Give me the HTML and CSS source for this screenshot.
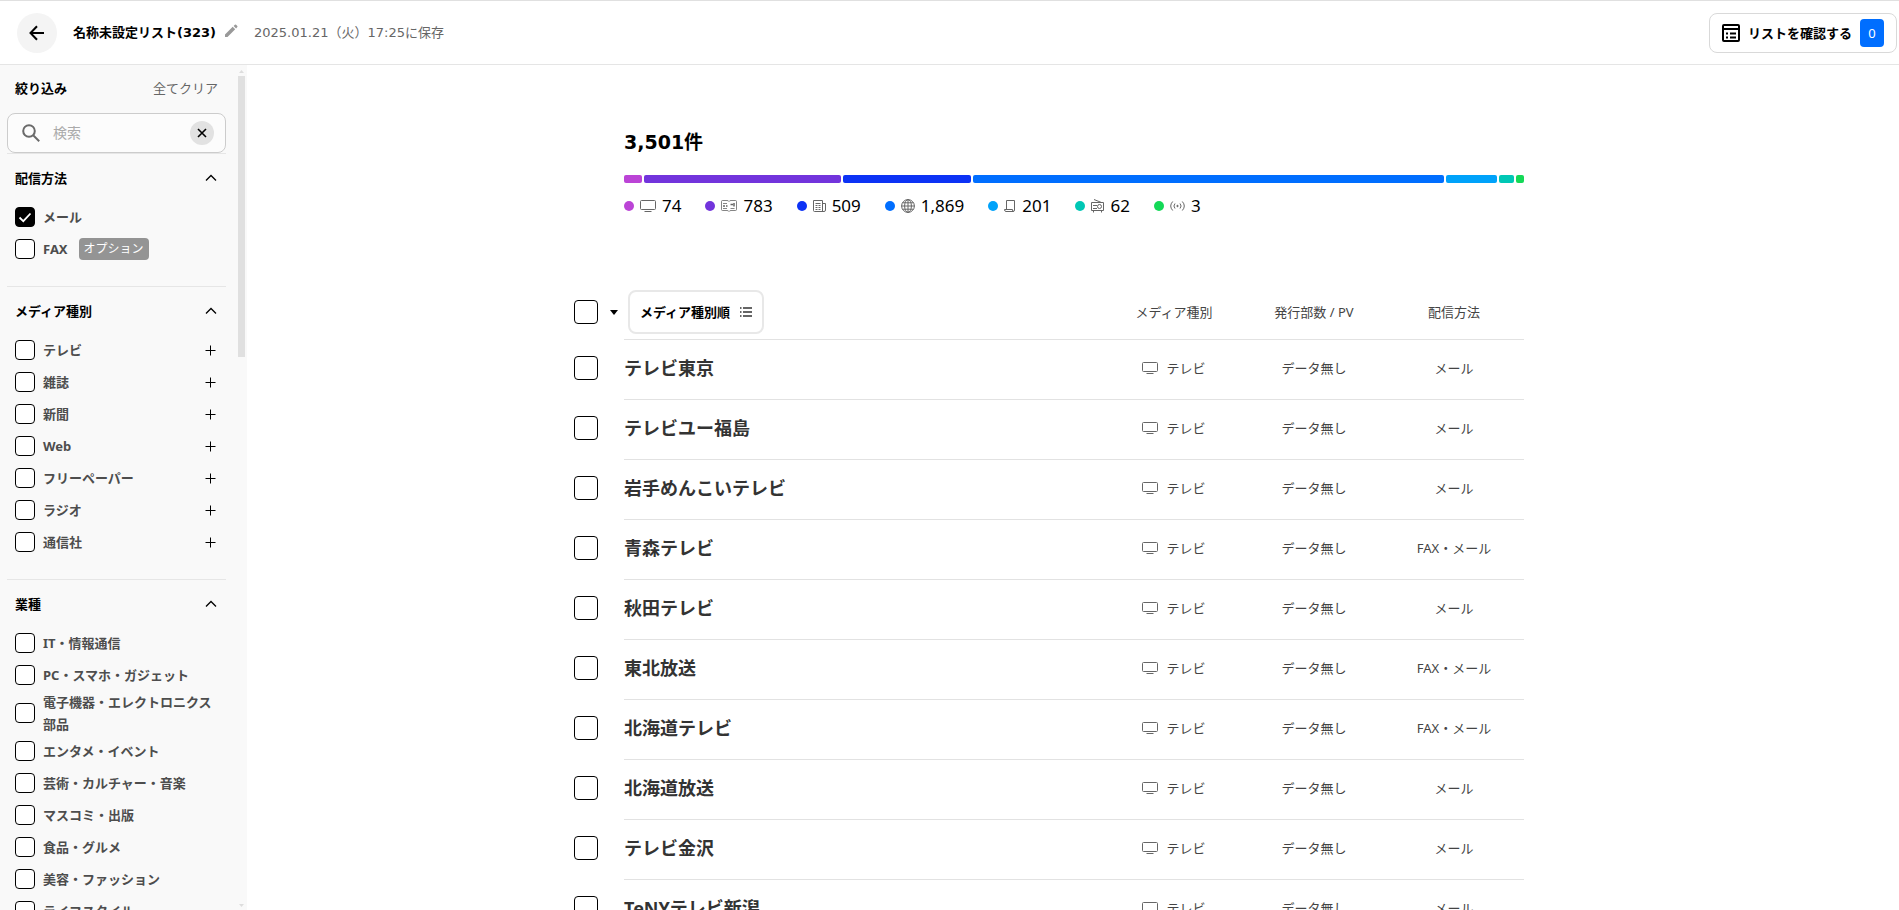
FILE: index.html
```html
<!DOCTYPE html>
<html lang="ja">
<head>
<meta charset="utf-8">
<title>名称未設定リスト</title>
<link rel="stylesheet" href="styles.css">
</head>
<body>
<svg class="sprite" aria-hidden="true">
  <symbol id="tv" viewBox="0 0 16 14"><rect x=".5" y="1.5" width="15" height="9" rx="1" fill="none" stroke="currentColor"/><path d="M4.500 12.500h7" stroke="currentColor"/></symbol>
  <symbol id="chevron" viewBox="0 0 12 8"><path d="M1 6.500 6 1.500l5 5" fill="none" stroke="currentColor" stroke-width="1.300"/></symbol>
  <symbol id="plus" viewBox="0 0 11 11"><path d="M.5 5.500h10M5.500.5v10" stroke="currentColor"/></symbol>
</svg>
<header class="header">
  <button class="back" aria-label="戻る"><svg width="16" height="16" viewBox="0 0 16 16"><path d="M15 8H1.500M8 1.200 1.500 8 8 14.800" fill="none" stroke="#000" stroke-width="2"/></svg></button>
  <h1 class="list-name">名称未設定リスト(323)</h1>
  <button class="edit" aria-label="名称を編集"><svg width="14" height="14" viewBox="0 0 14 14"><path d="M1 10.500 8.700 2.800l2.500 2.500L3.500 13H1zM9.600 1.900 10.900.7q.6-.5 1.200 0l1.200 1.200q.5.600 0 1.200l-1.200 1.300z" fill="#999"/></svg></button>
  <p class="saved">2025.01.21（火）17:25に保存</p>
  <button class="confirm">
    <svg width="18" height="18" viewBox="0 0 18 18" fill="none" stroke="#000" stroke-width="2"><rect x="1" y="1" width="16" height="16" rx="1"/><path d="M1 5h16M4 9.500h2M8 9.500h6M4 13.500h2M8 13.500h6"/></svg>
    <span>リストを確認する</span><span class="count">0</span>
  </button>
</header>
<div class="body">
  <aside class="sidebar">
    <div class="filters">
      <div class="filter-head"><h2>絞り込み</h2><button class="clear-all">全てクリア</button></div>
      <div class="search">
        <svg width="18" height="18" viewBox="0 0 18 18" fill="none" stroke="#6a6a6a" stroke-width="2"><circle cx="7" cy="7" r="5.800"/><path d="m11.200 11.200 6 6"/></svg>
        <input type="text" placeholder="検索" aria-label="検索">
        <button class="clear" aria-label="クリア"><svg width="10" height="10" viewBox="0 0 10 10"><path d="m1 1 8 8M9 1 1 9" stroke="#000" stroke-width="1.600"/></svg></button>
      </div>
      <section class="group">
        <h3><button>配信方法<svg width="12" height="8"><use href="#chevron"/></svg></button></h3>
        <div class="option"><label><input class="check" type="checkbox" checked><span>メール</span></label></div>
        <div class="option"><label><input class="check" type="checkbox"><span>FAX</span><span class="badge">オプション</span></label></div>
      </section>
      <section class="group">
        <h3><button>メディア種別<svg width="12" height="8"><use href="#chevron"/></svg></button></h3>
        <div class="option"><label><input class="check" type="checkbox"><span>テレビ</span></label><button class="expand" aria-label="テレビを開く"><svg width="11" height="11"><use href="#plus"/></svg></button></div>
        <div class="option"><label><input class="check" type="checkbox"><span>雑誌</span></label><button class="expand" aria-label="雑誌を開く"><svg width="11" height="11"><use href="#plus"/></svg></button></div>
        <div class="option"><label><input class="check" type="checkbox"><span>新聞</span></label><button class="expand" aria-label="新聞を開く"><svg width="11" height="11"><use href="#plus"/></svg></button></div>
        <div class="option"><label><input class="check" type="checkbox"><span>Web</span></label><button class="expand" aria-label="Webを開く"><svg width="11" height="11"><use href="#plus"/></svg></button></div>
        <div class="option"><label><input class="check" type="checkbox"><span>フリーペーパー</span></label><button class="expand" aria-label="フリーペーパーを開く"><svg width="11" height="11"><use href="#plus"/></svg></button></div>
        <div class="option"><label><input class="check" type="checkbox"><span>ラジオ</span></label><button class="expand" aria-label="ラジオを開く"><svg width="11" height="11"><use href="#plus"/></svg></button></div>
        <div class="option"><label><input class="check" type="checkbox"><span>通信社</span></label><button class="expand" aria-label="通信社を開く"><svg width="11" height="11"><use href="#plus"/></svg></button></div>
      </section>
      <section class="group">
        <h3><button>業種<svg width="12" height="8"><use href="#chevron"/></svg></button></h3>
        <div class="option"><label><input class="check" type="checkbox"><span>IT・情報通信</span></label></div>
        <div class="option"><label><input class="check" type="checkbox"><span>PC・スマホ・ガジェット</span></label></div>
        <div class="option"><label><input class="check" type="checkbox"><span>電子機器・エレクトロニクス部品</span></label></div>
        <div class="option"><label><input class="check" type="checkbox"><span>エンタメ・イベント</span></label></div>
        <div class="option"><label><input class="check" type="checkbox"><span>芸術・カルチャー・音楽</span></label></div>
        <div class="option"><label><input class="check" type="checkbox"><span>マスコミ・出版</span></label></div>
        <div class="option"><label><input class="check" type="checkbox"><span>食品・グルメ</span></label></div>
        <div class="option"><label><input class="check" type="checkbox"><span>美容・ファッション</span></label></div>
        <div class="option"><label><input class="check" type="checkbox"><span>ライフスタイル</span></label></div>
      </section>
    </div>
    <div class="scrollbar" aria-hidden="true">
      <svg width="5" height="3" viewBox="0 0 5 3"><path d="M0 3 2.500 0 5 3z" fill="#ddd"/></svg>
      <div class="track"><div class="thumb"></div></div>
      <svg width="5" height="3" viewBox="0 0 5 3"><path d="M0 0 2.500 3 5 0z" fill="#ddd"/></svg>
    </div>
  </aside>
  <main class="main">
    <div class="container">
      <section class="summary">
        <h2 class="total">3,501件</h2>
        <div class="bar">
          <i class="c1" style="flex-grow:18"></i><i class="c2" style="flex-grow:197"></i><i class="c3" style="flex-grow:128"></i><i class="c4" style="flex-grow:470"></i><i class="c5" style="flex-grow:51"></i><i class="c6" style="flex-grow:15"></i><i class="c7" style="flex-grow:8"></i>
        </div>
        <ul class="legend">
          <li><i class="dot c1"></i><svg width="16" height="14"><use href="#tv"/></svg>74</li>
          <li><i class="dot c2"></i><svg width="16" height="14" viewBox="0 0 16 14" fill="none" stroke="currentColor"><path d="M8 12.500q-.5-1-2-1H1.500q-1 0-1-1v-8q0-1 1-1H6q1.500 0 2 1 .5-1 2-1h4.500q1 0 1 1v8q0 1-1 1H10q-1.500 0-2 1z" stroke-width=".8"/><path d="M2 4.500h4M2 9.500h4M9.500 9.500h4" stroke-width=".8"/><path d="M2 7h2M5 7h1.500M9.500 5.500H12M13 4v3.500" stroke-width="1.500"/></svg>783</li>
          <li><i class="dot c3"></i><svg width="13" height="14" viewBox="0 0 13 14" fill="none" stroke="currentColor"><path d="M9.500 12.500V1.500h-9v10q0 1 1 1h9.500q1.500 0 1.500-1.500V4.500h-3M2.500 4.500h5M2.500 6.500h2M5.500 6.500h2M2.500 8.500h2M5.500 8.500h2M2.500 10.500h2M5.500 10.500h2"/></svg>509</li>
          <li><i class="dot c4"></i><svg width="14" height="14" viewBox="0 0 14 14" fill="none" stroke="currentColor"><circle cx="7" cy="7" r="6.400"/><ellipse cx="7" cy="7" rx="3.400" ry="6.400"/><path d="M7 .5v13M.5 7h13M1.500 3.800h11M1.500 10.200h11"/></svg>1,869</li>
          <li><i class="dot c5"></i><svg width="12" height="14" viewBox="0 0 12 14" fill="none" stroke="currentColor"><path d="M2.500 10V1.500h8V11q0 1.500-1.500 1.500H2q-1.500 0-1.500-2h8q0 2 1 2"/></svg>201</li>
          <li><i class="dot c6"></i><svg width="13" height="14" viewBox="0 0 13 14" fill="none" stroke="currentColor"><path d="M3 .5 10.500 3.500M.5 3.500h12v8H.5zM2.500 11.500v2M10.500 11.500v2M2 6.500h4M2 9.500h4"/><circle cx="8.500" cy="7.500" r="2"/></svg>62</li>
          <li><i class="dot c7"></i><svg width="15" height="14" viewBox="0 0 15 14" fill="none" stroke="currentColor"><path d="M2.700 2.500q-4 4.500 0 9M5 4.500q-2.200 2.500 0 5M12.300 2.500q4 4.500 0 9M10 4.500q2.200 2.500 0 5"/><circle cx="7.500" cy="7" r=".7" fill="currentColor"/></svg>3</li>
        </ul>
      </section>
      <table class="media">
        <thead>
          <tr>
            <th class="pick"><div class="pick-all"><input class="check large" type="checkbox" aria-label="全て選択"><button class="caret" aria-label="選択メニュー"><svg width="8" height="5" viewBox="0 0 8 5"><path d="M0 0h8L4 5z"/></svg></button></div></th>
            <th class="name"><button class="sort">メディア種別順<svg width="12" height="10" viewBox="0 0 12 10" stroke="#333" stroke-width="1.600"><path d="M0 1h1.500M3 1h9M0 5h1.500M3 5h9M0 9h1.500M3 9h9"/></svg></button></th>
            <th>メディア種別</th><th>発行部数 / PV</th><th>配信方法</th>
          </tr>
        </thead>
        <tbody>
          <tr><td class="pick"><input class="check large" type="checkbox" aria-label="テレビ東京"></td><td class="name">テレビ東京</td><td><span class="kind"><svg width="16" height="14"><use href="#tv"/></svg>テレビ</span></td><td>データ無し</td><td>メール</td></tr>
          <tr><td class="pick"><input class="check large" type="checkbox" aria-label="テレビユー福島"></td><td class="name">テレビユー福島</td><td><span class="kind"><svg width="16" height="14"><use href="#tv"/></svg>テレビ</span></td><td>データ無し</td><td>メール</td></tr>
          <tr><td class="pick"><input class="check large" type="checkbox" aria-label="岩手めんこいテレビ"></td><td class="name">岩手めんこいテレビ</td><td><span class="kind"><svg width="16" height="14"><use href="#tv"/></svg>テレビ</span></td><td>データ無し</td><td>メール</td></tr>
          <tr><td class="pick"><input class="check large" type="checkbox" aria-label="青森テレビ"></td><td class="name">青森テレビ</td><td><span class="kind"><svg width="16" height="14"><use href="#tv"/></svg>テレビ</span></td><td>データ無し</td><td>FAX・メール</td></tr>
          <tr><td class="pick"><input class="check large" type="checkbox" aria-label="秋田テレビ"></td><td class="name">秋田テレビ</td><td><span class="kind"><svg width="16" height="14"><use href="#tv"/></svg>テレビ</span></td><td>データ無し</td><td>メール</td></tr>
          <tr><td class="pick"><input class="check large" type="checkbox" aria-label="東北放送"></td><td class="name">東北放送</td><td><span class="kind"><svg width="16" height="14"><use href="#tv"/></svg>テレビ</span></td><td>データ無し</td><td>FAX・メール</td></tr>
          <tr><td class="pick"><input class="check large" type="checkbox" aria-label="北海道テレビ"></td><td class="name">北海道テレビ</td><td><span class="kind"><svg width="16" height="14"><use href="#tv"/></svg>テレビ</span></td><td>データ無し</td><td>FAX・メール</td></tr>
          <tr><td class="pick"><input class="check large" type="checkbox" aria-label="北海道放送"></td><td class="name">北海道放送</td><td><span class="kind"><svg width="16" height="14"><use href="#tv"/></svg>テレビ</span></td><td>データ無し</td><td>メール</td></tr>
          <tr><td class="pick"><input class="check large" type="checkbox" aria-label="テレビ金沢"></td><td class="name">テレビ金沢</td><td><span class="kind"><svg width="16" height="14"><use href="#tv"/></svg>テレビ</span></td><td>データ無し</td><td>メール</td></tr>
          <tr><td class="pick"><input class="check large" type="checkbox" aria-label="TeNYテレビ新潟"></td><td class="name">TeNYテレビ新潟</td><td><span class="kind"><svg width="16" height="14"><use href="#tv"/></svg>テレビ</span></td><td>データ無し</td><td>メール</td></tr>
        </tbody>
      </table>
    </div>
  </main>
</div>
</body>
</html>
```
FILE: styles.css
```css
* { box-sizing: border-box; margin: 0; padding: 0; }
body {
  height: 100vh;
  display: flex;
  flex-direction: column;
  overflow: hidden;
  background: #fff;
  color: #000;
  font: 13px/22px "Noto Sans", "Noto Sans CJK JP", sans-serif;
}
button { font: inherit; color: inherit; background: none; border: 0; cursor: pointer; }
svg { display: block; flex: none; }
.sprite { display: none; }
h1, h2, h3 { font-size: 13px; font-weight: 700; }

.header {
  flex: none;
  display: flex;
  align-items: center;
  height: 65px;
  padding: 0 2px 0 17px;
  border-top: 1px solid #e0e0e0;
  border-bottom: 1px solid #e5e5e5;
}
.back {
  display: flex;
  align-items: center;
  justify-content: center;
  width: 40px;
  height: 40px;
  margin-right: 16px;
  border-radius: 50%;
  background: #f4f4f4;
}
.list-name { font-family: "DejaVu Sans", "Noto Sans CJK JP", sans-serif; }
.edit { margin: 0 16px 4px 8px; }
.saved { color: #666; font-family: "DejaVu Sans", "Noto Sans CJK JP", sans-serif; }
.confirm {
  display: flex;
  align-items: center;
  gap: 8px;
  height: 40px;
  margin-left: auto;
  padding: 0 12px;
  border: 1px solid #d9d9d9;
  border-radius: 8px;
  font-weight: 700;
}
.count {
  width: 24px;
  border-radius: 4px;
  background: #006eff;
  color: #fff;
  font-weight: 400;
  line-height: 28px;
}

.body { flex: 1; min-height: 0; display: flex; }
.sidebar {
  flex: none;
  display: flex;
  width: 247px;
  background: #f9f9f9;
  overflow: hidden;
}
.filters { width: 226px; padding-left: 7px; overflow: hidden; }
.filter-head {
  display: flex;
  align-items: center;
  justify-content: space-between;
  height: 48px;
  padding: 0 8px 2px;
}
.clear-all { color: #666; }
.search {
  display: flex;
  align-items: center;
  height: 40px;
  padding: 0 11px 0 14px;
  border: 1px solid #ccc;
  border-radius: 8px;
  background: #fcfcfc;
}
.search input {
  flex: 1;
  min-width: 0;
  padding-left: 13px;
  border: 0;
  outline: 0;
  background: none;
  font: inherit;
  font-size: 14px;
}
.search input::placeholder { color: #aaa; }
.clear {
  display: flex;
  align-items: center;
  justify-content: center;
  width: 24px;
  height: 24px;
  border-radius: 50%;
  background: #e2e2e2;
}
.group { padding-bottom: 21px; border-top: 1px solid #e6e6e6; }
.group h3 button {
  display: flex;
  align-items: center;
  justify-content: space-between;
  width: 100%;
  height: 47px;
  padding: 0 9px 0 8px;
}
.option {
  display: flex;
  align-items: center;
  min-height: 32px;
  padding: 0 10px 0 8px;
}
.option label {
  flex: 1;
  display: flex;
  align-items: center;
  gap: 8px;
  color: #4d4d4d;
  font-weight: 700;
}
.badge {
  margin-left: 3px;
  padding: 0 5px;
  border-radius: 4px;
  background: #949494;
  color: #fff;
  font-size: 12px;
  font-weight: 400;
}
.check {
  appearance: none;
  flex: none;
  width: 20px;
  height: 20px;
  border: 1px solid #000;
  border-radius: 4px;
  background: #fff;
}
.check:checked {
  background: #000 url("data:image/svg+xml,%3Csvg xmlns='http://www.w3.org/2000/svg' viewBox='0 0 18 18'%3E%3Cpath d='M3.500 9.500l3.800 3.700 7.200-7.700' fill='none' stroke='white' stroke-width='1.800'/%3E%3C/svg%3E");
}
.large { display: block; width: 24px; height: 24px; }
.scrollbar {
  display: flex;
  flex-direction: column;
  align-items: center;
  width: 7px;
  margin-left: 12px;
  padding: 5px 0 3px;
}
.track { flex: 1; width: 100%; padding: 3px 0; }
.thumb { height: 34%; background: #e0e0e0; }

.main { flex: 1; min-width: 0; overflow: hidden; }
.container {
  max-width: 1000px;
  margin: 0 auto;
  padding: 64px 49px 0 0;
}
.summary { margin-left: 51px; }
.total {
  font: 700 19px/26px "DejaVu Sans", "Noto Sans CJK JP", sans-serif;
}
.bar { display: flex; gap: 2px; margin: 20px 0 12px; }
.bar i { flex-basis: 0; height: 8px; border-radius: 2px; }
.c1 { background: #bb44d6; }
.c2 { background: #7234dc; }
.c3 { background: #0c32f5; }
.c4 { background: #006eff; }
.c5 { background: #00a2fa; }
.c6 { background: #00c7b5; }
.c7 { background: #14d957; }
.legend { display: flex; gap: 24px; list-style: none; }
.legend li { display: flex; align-items: center; gap: 6px; font-size: 17px; }
.legend svg, .kind svg { color: #666; }
.dot { width: 10px; height: 10px; border-radius: 50%; }

.media {
  width: 100%;
  margin-top: 68px;
  table-layout: fixed;
  border-collapse: collapse;
}
.media th, .media td {
  width: 140px;
  height: 60px;
  border-bottom: 1px solid #e2e2e2;
  color: #444;
  font-weight: 400;
  text-align: center;
  vertical-align: middle;
}
.media thead th { height: 54px; }
.media tbody td { padding-bottom: 2px; }
.media .pick { width: 51px; padding-left: 1px; border: 0; }
.media .name { width: auto; text-align: left; }
.media td.name { color: #333; font-size: 18px; font-weight: 700; }
.pick-all { display: flex; align-items: center; gap: 12px; }
.caret { display: block; }
.sort {
  display: flex;
  align-items: center;
  gap: 10px;
  height: 44px;
  margin-left: 4px;
  padding: 0 10px;
  border: 2px solid #e8e8e8;
  border-radius: 8px;
  color: #000;
  font-weight: 700;
}
.kind { display: flex; align-items: center; justify-content: center; gap: 8px; }
```
